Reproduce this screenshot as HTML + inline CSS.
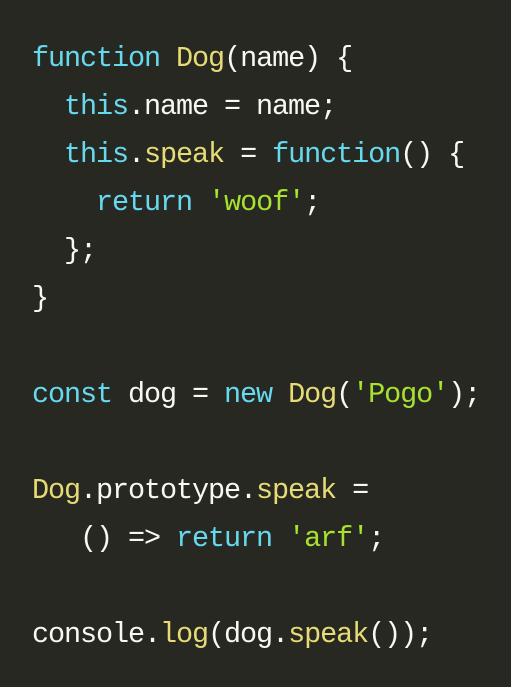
<!DOCTYPE html>
<html><head><meta charset="utf-8"><style>
html,body{margin:0;padding:0;background:#272822;width:511px;height:687px;overflow:hidden}
pre{margin:0;padding:35px 0 0 32px;font-family:"Liberation Mono",monospace;font-size:28.5px;letter-spacing:-1.1px;line-height:48px;color:#f8f8f2;white-space:pre}
.k{color:#66d9ef}.y{color:#e6db74}.s{color:#a6e22e}
</style></head><body><pre><span class="k">function</span> <span class="y">Dog</span>(name) {
  <span class="k">this</span>.name = name;
  <span class="k">this</span>.<span class="y">speak</span> = <span class="k">function</span>() {
    <span class="k">return</span> <span class="s">'woof'</span>;
  };
}

<span class="k">const</span> dog = <span class="k">new</span> <span class="y">Dog</span>(<span class="s">'Pogo'</span>);

<span class="y">Dog</span>.prototype.<span class="y">speak</span> =
   () =&gt; <span class="k">return</span> <span class="s">'arf'</span>;

console.<span class="y">log</span>(dog.<span class="y">speak</span>());</pre></body></html>
